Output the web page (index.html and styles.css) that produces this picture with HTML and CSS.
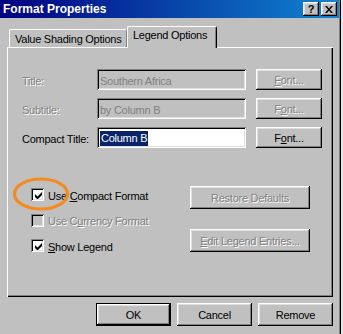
FILE: index.html
```html
<!DOCTYPE html>
<html>
<head>
<meta charset="utf-8">
<link rel="stylesheet" href="styles.css">
</head>
<body>
<div class="window">
  <div class="titlebar">
    <span class="title">Format Properties</span>
    <div class="tb-btns">
      <span class="tb-btn help">?</span>
      <span class="tb-btn close"><svg width="8" height="7" viewBox="0 0 8 7"><path d="M0 0h2l2 2.5L6 0h2L5 3.5 8 7H6L4 4.5 2 7H0l3-3.5z" fill="#000"/></svg></span>
    </div>
  </div>
  <div class="content">
    <div class="tabs">
      <div class="tab">Value Shading Options</div>
      <div class="tab active">Legend Options</div>
    </div>
    <div class="panel">
      <div class="fields">
        <label class="lbl disabled">Title:</label>
        <div class="textbox dis">Southern Africa</div>
        <div class="btn disabled"><span><u>F</u>ont...</span></div>

        <label class="lbl disabled">Subtitle:</label>
        <div class="textbox dis">by Column B</div>
        <div class="btn disabled"><span>F<u>o</u>nt...</span></div>

        <label class="lbl">Compact Title:</label>
        <div class="textbox"><span class="sel">Column B</span></div>
        <div class="btn"><span>F<u>o</u>nt...</span></div>
      </div>
      <div class="options">
        <div class="checks">
          <div class="check"><span class="box"><svg width="7" height="7" viewBox="0 0 7 7"><path d="M0 2v3l2 2h1l4-4V0L2.5 4.5z" fill="#000"/></svg></span><span>Use <u>C</u>ompact Format</span></div>
          <div class="check disabled"><span class="box off"></span><span>Use C<u>u</u>rrency Format</span></div>
          <div class="check"><span class="box"><svg width="7" height="7" viewBox="0 0 7 7"><path d="M0 2v3l2 2h1l4-4V0L2.5 4.5z" fill="#000"/></svg></span><span><u>S</u>how Legend</span></div>
        </div>
        <div class="side-btns">
          <div class="btn wide disabled"><span>Restore Defaults</span></div>
          <div class="btn wide disabled"><span><u>E</u>dit Legend Entries...</span></div>
        </div>
      </div>
    </div>
    <div class="footer">
      <div class="btn foot default"><span>OK</span></div>
      <div class="btn foot"><span>Cancel</span></div>
      <div class="btn foot"><span>Remove</span></div>
    </div>
  </div>
  <svg class="annot" width="60" height="37" viewBox="0 0 60 37"><ellipse cx="29" cy="18" rx="26.5" ry="15" fill="none" stroke="#f58a1f" stroke-width="3.2"/></svg>
</div>
</body>
</html>
```
FILE: styles.css
```css
* { box-sizing: border-box; }
html, body { margin: 0; padding: 0; }
body {
  width: 343px;
  height: 334px;
  overflow: hidden;
  background: #e8e8e8;
  font-family: "Liberation Sans", Arial, sans-serif;
  font-size: 11px;
  letter-spacing: -0.25px;
  color: #000;
}
.window {
  position: relative;
  width: 340px;
  height: 334px;
  background: #c0c0c0;
  border-right: 1px solid #808080;
  box-shadow: 1px 0 0 #000;
}
.titlebar {
  height: 18px;
  display: flex;
  align-items: center;
  justify-content: space-between;
  padding: 0 2px 0 3px;
  background: linear-gradient(to right, #000080, #1084d0);
}
.title {
  color: #fff;
  font-weight: bold;
  font-size: 12px;
  letter-spacing: 0;
}
.tb-btns { display: flex; gap: 2px; }
.tb-btn {
  width: 16px;
  height: 14px;
  background: #c0c0c0;
  box-shadow: inset -1px -1px #000, inset 1px 1px #fff, inset -2px -2px #808080, inset 2px 2px #dfdfdf;
  display: flex;
  align-items: center;
  justify-content: center;
  font-weight: bold;
  font-size: 11px;
  line-height: 1;
  letter-spacing: 0;
}
.help { padding-top: 1px; }
.content {
  padding: 8px 0 0 7px;
  width: 333px;
}
.tabs {
  display: flex;
  align-items: flex-end;
  padding-left: 2px;
  height: 21px;
}
.tab {
  height: 18px;
  padding: 3px 0 0 5px;
  width: 118px;
  background: #c0c0c0;
  border-top: 1px solid #fff;
  border-left: 1px solid #fff;
  border-right: 1px solid #808080;
  border-radius: 2px 2px 0 0;
  position: relative;
}
.tab.active {
  width: 90px;
  height: 22px;
  margin-bottom: -1px;
  padding: 2px 0 0 5px;
  border-right: 1px solid #000;
  box-shadow: inset -1px 0 #808080;
  z-index: 2;
}
.panel {
  position: relative;
  width: 326px;
  height: 250px;
  padding: 22px 0 0 15px;
  box-shadow: inset 1px 1px #fff, inset -1px -1px #000, inset -2px -2px #808080;
}
.fields {
  display: grid;
  grid-template-columns: 75px 149px 76px;
  grid-auto-rows: 21px;
  row-gap: 8px;
  align-items: center;
}
.fields .btn { margin-left: 10px; }
.lbl { padding-top: 3px; white-space: nowrap; }
.disabled, .lbl.disabled { color: #808080; text-shadow: 1px 1px 0 #fff; }
.textbox {
  height: 21px;
  background: #fff;
  box-shadow: inset 1px 1px #808080, inset -1px -1px #fff, inset 2px 2px #000, inset -2px -2px #dfdfdf;
  padding: 2px 3px 0 3px;
  display: flex;
  align-items: center;
}
.textbox.dis { background: #c0c0c0; color: #808080; }
.sel {
  background: #0a246a;
  color: #fff;
  padding: 1px 1px 2px 1px;
  margin-top: -1px;
}
.btn {
  height: 21px;
  background: #c0c0c0;
  box-shadow: inset -1px -1px #000, inset 1px 1px #fff, inset -2px -2px #808080, inset 2px 2px #dfdfdf;
  display: flex;
  align-items: center;
  justify-content: center;
  padding-top: 1px;
}
.options {
  display: flex;
  margin-top: 38px;
  padding-left: 9px;
}
.checks {
  width: 159px;
  display: flex;
  flex-direction: column;
  gap: 12.5px;
  padding-top: 2px;
}
.check {
  display: flex;
  align-items: center;
  height: 13px;
  gap: 4px;
}
.box {
  width: 13px;
  height: 13px;
  flex: none;
  background: #fff;
  box-shadow: inset 1px 1px #808080, inset -1px -1px #fff, inset 2px 2px #000, inset -2px -2px #dfdfdf;
  display: flex;
  align-items: center;
  justify-content: center;
  padding: 1px 0 0 1px;
  text-shadow: none;
}
.box.off { background: #c0c0c0; }
.check > span:last-child { padding-top: 2px; }
.side-btns {
  display: flex;
  flex-direction: column;
  gap: 20px;
}
.btn.wide { width: 120px; height: 23px; }
.footer {
  display: flex;
  justify-content: flex-end;
  gap: 6px;
  margin-top: 6px;
  width: 326px;
}
.btn.foot { width: 75px; height: 23px; }
.btn.default {
  box-shadow: inset 0 0 0 1px #000, inset -2px -2px #000, inset 2px 2px #fff, inset -3px -3px #808080, inset 3px 3px #dfdfdf;
}
u { text-decoration: underline; text-underline-offset: 1px; }
.annot {
  position: absolute;
  left: 12px;
  top: 176px;
  z-index: 5;
}
```
